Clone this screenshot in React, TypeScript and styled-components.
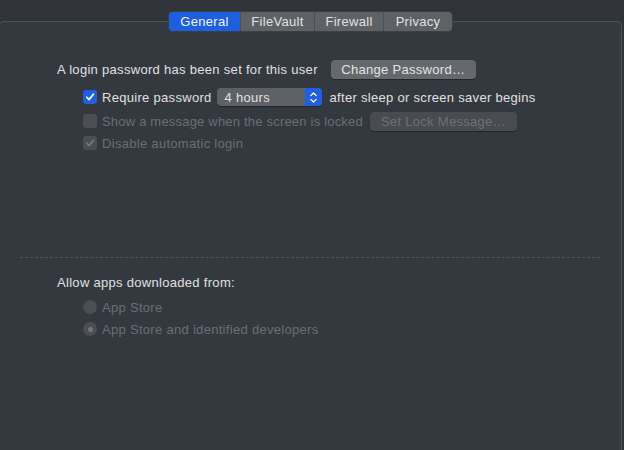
import React from 'react';
import styled, { createGlobalStyle, css } from 'styled-components';

const GlobalStyle = createGlobalStyle`
  html, body {
    margin: 0;
    padding: 0;
    background: #30343a;
    overflow: hidden;
  }
  body {
    font-family: 'Liberation Sans', 'Helvetica Neue', Arial, sans-serif;
    font-size: 13px;
    letter-spacing: 0.3px;
    color: #dcdcdc;
    -webkit-font-smoothing: antialiased;
  }
`;

const Window = styled.div`
  width: 624px;
  height: 450px;
  padding-top: 21px;
  box-sizing: border-box;
`;

const Panel = styled.div`
  margin: 0 2px 0 -1px;
  height: 440px;
  border: 1px solid #4b4f55;
  border-bottom: none;
  border-radius: 5px 5px 0 0;
  background: #343940;
  display: flex;
  flex-direction: column;
`;

const TabBar = styled.div`
  align-self: center;
  display: flex;
  margin-top: -10px;
  height: 19px;
  border-radius: 4px;
  background: #5e6165;
  box-shadow: 0 0 0 0.5px #45484d;
  overflow: hidden;
`;

const Tab = styled.div<{ $active?: boolean }>`
  display: flex;
  align-items: center;
  justify-content: center;
  height: 100%;
  font-size: 13px;
  color: #e2e2e2;
  border-left: 1px solid #4c4f53;
  &:first-child {
    border-left: none;
  }
  ${({ $active }) =>
    $active &&
    css`
      background: #1e5fe0;
      color: #f2f4ff;
    `}
`;

const Content = styled.div`
  padding: 27px 0 0 57px;
  display: flex;
  flex-direction: column;
`;

const Row = styled.div<{ $indent?: boolean }>`
  display: flex;
  align-items: center;
  height: 22px;
  padding-left: ${({ $indent }) => ($indent ? '26px' : '0')};
  gap: 5px;
`;

const Label = styled.span<{ $disabled?: boolean }>`
  white-space: nowrap;
  color: ${({ $disabled }) => ($disabled ? '#6b6e73' : '#e0e0e0')};
`;

const Button = styled.div<{ $disabled?: boolean; $width: number }>`
  width: ${({ $width }) => $width}px;
  height: 19px;
  box-sizing: border-box;
  border-radius: 4px;
  display: flex;
  align-items: center;
  justify-content: center;
  white-space: nowrap;
  background: ${({ $disabled }) => ($disabled ? '#484b50' : '#65686c')};
  color: ${({ $disabled }) => ($disabled ? '#6e7176' : '#e4e4e4')};
  box-shadow: 0 0.5px 1px rgba(0, 0, 0, 0.35);
`;

const Check = styled.div<{ $checked?: boolean; $disabled?: boolean }>`
  width: 14px;
  height: 14px;
  box-sizing: border-box;
  border-radius: 3px;
  display: flex;
  align-items: center;
  justify-content: center;
  flex-shrink: 0;
  background: ${({ $checked, $disabled }) =>
    $disabled ? '#4b4e53' : $checked ? '#1f60e2' : '#65686c'};
`;

const Radio = styled.div<{ $selected?: boolean }>`
  width: 14px;
  height: 14px;
  border-radius: 50%;
  background: #4b4e53;
  display: flex;
  align-items: center;
  justify-content: center;
  flex-shrink: 0;
  &::after {
    content: '';
    width: 5px;
    height: 5px;
    border-radius: 50%;
    background: #74777c;
    display: ${({ $selected }) => ($selected ? 'block' : 'none')};
  }
`;

const Popup = styled.div`
  width: 105px;
  height: 18px;
  border-radius: 4px;
  background: #5d6064;
  display: flex;
  overflow: hidden;
  box-shadow: 0 0.5px 1px rgba(0, 0, 0, 0.35);
`;

const PopupValue = styled.span`
  flex: 1;
  padding-left: 8px;
  display: flex;
  align-items: center;
  color: #e2e2e2;
`;

const PopupArrows = styled.div`
  width: 17px;
  background: #1f60e2;
  display: flex;
  align-items: center;
  justify-content: center;
`;

const Separator = styled.div`
  margin: 103px 21px 0 20px;
  border-top: 1px dashed #50545a;
`;

const Section = styled.div`
  padding: 13px 0 0 57px;
  display: flex;
  flex-direction: column;
`;

const CheckMark = ({ color }: { color: string }) => (
  <svg width="10" height="10" viewBox="0 0 10 10">
    <path d="M1.8 5.2 L4 7.6 L8.4 2.2" fill="none" stroke={color} strokeWidth="1.7" strokeLinecap="round" strokeLinejoin="round" />
  </svg>
);

const Chevrons = () => (
  <svg width="9" height="13" viewBox="0 0 9 13">
    <path d="M1.8 4.6 L4.5 2 L7.2 4.6 M1.8 8.4 L4.5 11 L7.2 8.4" fill="none" stroke="#ffffff" strokeWidth="1.3" strokeLinecap="round" strokeLinejoin="round" />
  </svg>
);

const tabs = [
  { name: 'General', width: 71 },
  { name: 'FileVault', width: 73 },
  { name: 'Firewall', width: 68 },
  { name: 'Privacy', width: 68 },
];

export default function App() {
  return (
    <Window>
      <GlobalStyle />
      <Panel>
        <TabBar>
          {tabs.map((t, i) => (
            <Tab key={t.name} $active={i === 0} style={{ width: t.width }}>
              {t.name}
            </Tab>
          ))}
        </TabBar>
        <Content>
          <Row style={{ gap: 13 }}>
            <Label>A login password has been set for this user</Label>
            <Button $width={145}>Change Password…</Button>
          </Row>
          <Row $indent style={{ marginTop: 6 }}>
            <Check $checked>
              <CheckMark color="#ffffff" />
            </Check>
            <Label>Require password</Label>
            <Popup>
              <PopupValue>4 hours</PopupValue>
              <PopupArrows>
                <Chevrons />
              </PopupArrows>
            </Popup>
            <Label style={{ marginLeft: 3 }}>after sleep or screen saver begins</Label>
          </Row>
          <Row $indent style={{ marginTop: 2 }}>
            <Check $disabled />
            <Label $disabled style={{ letterSpacing: '0.2px' }}>
              Show a message when the screen is locked
            </Label>
            <Button $disabled $width={147} style={{ marginLeft: 2 }}>
              Set Lock Message…
            </Button>
          </Row>
          <Row $indent>
            <Check $disabled>
              <CheckMark color="#74777c" />
            </Check>
            <Label $disabled>Disable automatic login</Label>
          </Row>
        </Content>
        <Separator />
        <Section>
          <Row>
            <Label>Allow apps downloaded from:</Label>
          </Row>
          <Row $indent style={{ marginTop: 3 }}>
            <Radio />
            <Label $disabled>App Store</Label>
          </Row>
          <Row $indent>
            <Radio $selected />
            <Label $disabled>App Store and identified developers</Label>
          </Row>
        </Section>
      </Panel>
    </Window>
  );
}
